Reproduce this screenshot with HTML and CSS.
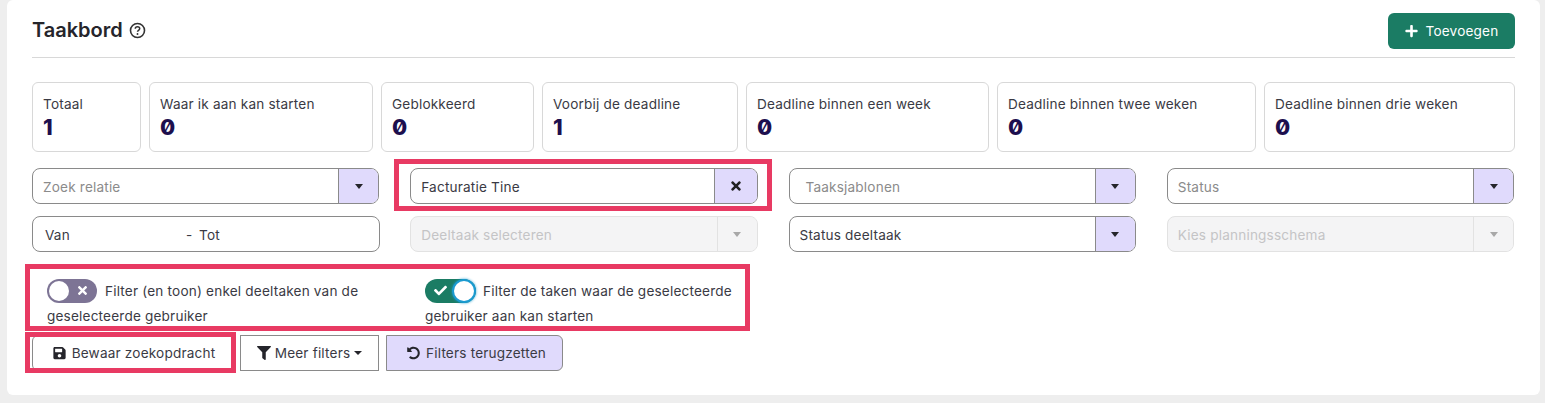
FILE: index.html
```html
<!DOCTYPE html>
<html lang="nl">
<head>
<meta charset="utf-8">
<title>Taakbord</title>
<link rel="stylesheet" href="styles.css">
</head>
<body>
<main class="card">
  <header class="head">
    <h1 class="title">Taakbord
      <svg class="help" viewBox="0 0 16 16"><circle cx="8" cy="8" r="6.6" fill="none" stroke="currentColor" stroke-width="1.5"/><path d="M5.9 6.3c0-1.2 1-1.9 2.1-1.9 1.2 0 2.1.7 2.1 1.8 0 1.6-2.1 1.6-2.1 3" fill="none" stroke="currentColor" stroke-width="1.4"/><circle cx="8" cy="11.3" r=".9" fill="currentColor"/></svg>
    </h1>
    <button class="add"><svg class="ico" viewBox="0 0 448 512"><path fill="currentColor" d="M416 208H272V64c0-17.67-14.33-32-32-32h-32c-17.67 0-32 14.33-32 32v144H32c-17.67 0-32 14.33-32 32v32c0 17.67 14.33 32 32 32h144v144c0 17.67 14.33 32 32 32h32c17.67 0 32-14.33 32-32V304h144c17.67 0 32-14.33 32-32v-32c0-17.67-14.33-32-32-32z"/></svg>Toevoegen</button>
  </header>

  <section class="stats">
    <div class="stat s1"><span class="label">Totaal</span><b class="value">1</b></div>
    <div class="stat s2"><span class="label">Waar ik aan kan starten</span><b class="value">0</b></div>
    <div class="stat s3"><span class="label">Geblokkeerd</span><b class="value">0</b></div>
    <div class="stat s4"><span class="label">Voorbij de deadline</span><b class="value">1</b></div>
    <div class="stat s5"><span class="label">Deadline binnen een week</span><b class="value">0</b></div>
    <div class="stat s6"><span class="label">Deadline binnen twee weken</span><b class="value">0</b></div>
    <div class="stat s7"><span class="label">Deadline binnen drie weken</span><b class="value">0</b></div>
  </section>

  <section class="filters">
    <div class="select"><span class="ph">Zoek relatie</span><span class="addon"><i class="caret"></i></span></div>
    <div class="select"><span class="val">Facturatie Tine</span><span class="addon wide"><svg class="x" viewBox="0 0 352 512"><path fill="currentColor" d="M242.72 256l100.07-100.07c12.28-12.28 12.28-32.19 0-44.48l-22.24-22.24c-12.28-12.28-32.19-12.28-44.48 0L176 189.28 75.93 89.21c-12.28-12.28-32.19-12.28-44.48 0L9.21 111.45c-12.28 12.28-12.28 32.19 0 44.48L109.28 256 9.21 356.07c-12.28 12.28-12.28 32.19 0 44.48l22.24 22.24c12.28 12.28 32.2 12.28 44.48 0L176 322.72l100.07 100.07c12.28 12.28 32.2 12.28 44.48 0l22.24-22.24c12.28-12.28 12.28-32.19 0-44.48L242.72 256z"/></svg></span></div>
    <div class="select"><span class="ph indent">Taaksjablonen</span><span class="addon"><i class="caret"></i></span></div>
    <div class="select"><span class="ph">Status</span><span class="addon"><i class="caret"></i></span></div>

    <div class="select date"><span class="van">Van</span><span class="dash">-</span><span class="tot">Tot</span></div>
    <div class="select off"><span class="ph">Deeltaak selecteren</span><span class="addon"><i class="caret"></i></span></div>
    <div class="select"><span class="val">Status deeltaak</span><span class="addon"><i class="caret"></i></span></div>
    <div class="select off"><span class="ph">Kies planningsschema</span><span class="addon"><i class="caret"></i></span></div>
  </section>

  <section class="toggles">
    <p class="tog-text t1"><span class="toggle no"><i class="knob"></i><svg class="tx" viewBox="0 0 352 512"><path fill="currentColor" d="M242.72 256l100.07-100.07c12.28-12.28 12.28-32.19 0-44.48l-22.24-22.24c-12.28-12.28-32.19-12.28-44.48 0L176 189.28 75.93 89.21c-12.28-12.28-32.19-12.28-44.48 0L9.21 111.45c-12.28 12.28-12.28 32.19 0 44.48L109.28 256 9.21 356.07c-12.28 12.28-12.28 32.19 0 44.48l22.24 22.24c12.28 12.28 32.2 12.28 44.48 0L176 322.72l100.07 100.07c12.28 12.28 32.2 12.28 44.48 0l22.24-22.24c12.28-12.28 12.28-32.19 0-44.48L242.72 256z"/></svg></span>Filter (en toon) enkel deeltaken van de geselecteerde gebruiker</p>
    <p class="tog-text t2"><span class="toggle yes"><svg class="tc" viewBox="0 0 512 512"><path fill="currentColor" d="M173.898 439.404l-166.4-166.4c-9.997-9.997-9.997-26.206 0-36.204l36.203-36.204c9.997-9.998 26.207-9.998 36.204 0L192 312.69 432.095 72.596c9.997-9.997 26.207-9.997 36.204 0l36.203 36.204c9.997 9.997 9.997 26.206 0 36.204l-294.4 294.401c-9.998 9.997-26.207 9.997-36.204-.001z"/></svg><i class="knob"></i></span>Filter de taken waar de geselecteerde gebruiker aan kan starten</p>
  </section>

  <section class="actions">
    <button class="btn save"><svg class="ico" viewBox="0 0 448 512"><path fill="currentColor" d="M433.941 129.941l-83.882-83.882A48 48 0 0 0 316.118 32H48C21.49 32 0 53.49 0 80v352c0 26.51 21.49 48 48 48h352c26.51 0 48-21.49 48-48V163.882a48 48 0 0 0-14.059-33.941zM224 416c-35.346 0-64-28.654-64-64 0-35.346 28.654-64 64-64s64 28.654 64 64c0 35.346-28.654 64-64 64zm96-304.52V212c0 6.627-5.373 12-12 12H76c-6.627 0-12-5.373-12-12V108c0-6.627 5.373-12 12-12h228.52c3.183 0 6.235 1.264 8.485 3.515l3.48 3.48A11.996 11.996 0 0 1 320 111.48z"/></svg>Bewaar zoekopdracht</button>
    <button class="btn more"><svg class="ico funnel" viewBox="0 0 512 512"><path fill="currentColor" d="M487.976 0H24.028C2.71 0-8.047 25.866 7.058 40.971L192 225.941V432c0 7.831 3.821 15.17 10.237 19.662l80 55.98C298.02 518.69 320 507.493 320 487.98V225.941l184.947-184.97C520.021 25.896 509.338 0 487.976 0z"/></svg>Meer filters<i class="caret small"></i></button>
    <button class="btn reset"><svg class="ico" viewBox="0 0 512 512"><path fill="currentColor" d="M255.545 8c-66.269.119-126.438 26.233-170.86 68.685L48.971 40.971C33.851 25.851 8 36.559 8 57.941V192c0 13.255 10.745 24 24 24h134.059c21.382 0 32.09-25.851 16.971-40.971l-41.75-41.75c30.864-28.899 70.801-44.907 113.23-45.273 92.398-.798 170.283 73.977 169.484 169.442C423.236 348.009 349.816 424 256 424c-41.127 0-79.997-14.678-110.63-41.556-4.743-4.161-11.906-3.908-16.368.553L89.34 422.659c-4.872 4.872-4.631 12.815.482 17.433C133.798 479.813 192.074 504 256 504c136.966 0 247.999-111.033 248-247.998C504.001 119.193 392.354 7.755 255.545 8z"/></svg>Filters terugzetten</button>
  </section>

  <div class="mark m1"></div>
  <div class="mark m2"></div>
  <div class="mark m3"></div>
</main>
</body>
</html>
```

FILE: styles.css
```css
* { box-sizing: border-box; }
html, body { margin: 0; height: 403px; overflow: hidden; }
body {
  background: #eeeeee;
  font-family: Inter, "Liberation Sans", sans-serif;
  font-size: 13.6px;
  letter-spacing: .18px;
  color: #3a3a44;
  padding: 0 5px 8px 7px;
}
.card {
  position: relative;
  height: 395px;
  background: #fff;
  border-radius: 6px;
  padding: 13px 25px 0;
}

.head {
  display: flex;
  justify-content: space-between;
  align-items: flex-start;
  height: 45px;
  border-bottom: 1px solid #d8d8d8;
}
.title {
  margin: 3px 0 0;
  font-size: 20px;
  font-weight: 600;
  letter-spacing: 0;
  line-height: 28px;
  color: #25252b;
  display: flex;
  align-items: center;
  gap: 6px;
}
.help { width: 17px; height: 17px; color: #333; }
.add {
  width: 127px;
  height: 36px;
  border: 0;
  border-radius: 6px;
  background: #1b7c64;
  color: #fff;
  font: inherit;
  letter-spacing: .18px;
  display: flex;
  align-items: center;
  justify-content: center;
  gap: 8px;
}
.ico { width: 13px; height: 14px; flex: none; }

.stats { display: flex; gap: 8px; margin-top: 24px; }
.stat {
  height: 70px;
  border: 1px solid #d8d8d8;
  border-radius: 6px;
  padding: 12px 10px 0;
  display: flex;
  flex-direction: column;
}
.s1 { width: 109px; }
.s2 { width: 224px; }
.s3 { width: 153px; }
.s4 { width: 196px; }
.s5 { width: 243px; }
.s6 { width: 259px; }
.s7 { width: 251px; }
.label { line-height: 18px; }
.value {
  font-size: 22px;
  line-height: 28px;
  font-weight: 800;
  letter-spacing: 0;
  color: #1d0f4e;
  font-feature-settings: "zero";
}

.filters {
  display: grid;
  grid-template-columns: repeat(4, 1fr);
  gap: 12px 30px;
  margin-top: 16px;
}
.select {
  display: flex;
  height: 36px;
  margin-right: 1px;
  border: 1px solid #8a8a8a;
  border-radius: 8px;
  overflow: hidden;
  align-items: center;
  background: #fff;
}
.select > span:first-child { flex: 1; padding: 2px 0 0 10px; white-space: nowrap; }
.ph { color: #8b8b8b; }
.indent { padding-left: 16px !important; }
.val { color: #3a3a44; }
.addon {
  flex: none;
  width: 40px;
  height: 100%;
  background: #e0dafc;
  border-left: 1px solid #8a8a8a;
  display: flex;
  align-items: center;
  justify-content: center;
}
.addon.wide { width: 43px; }
.x { width: 10px; height: 14px; color: #222; }
.caret {
  display: inline-block;
  width: 0;
  height: 0;
  border-left: 4.5px solid transparent;
  border-right: 4.5px solid transparent;
  border-top: 5px solid #25252b;
}
.caret.small {
  border-left-width: 4px;
  border-right-width: 4px;
  border-top-width: 4px;
  margin-left: 0;
}
.select.off { background: #f4f4f5; border-color: #e2e2e2; }
.off .ph { color: #c4c4c6; }
.off .addon { background: #f4f4f5; border-left-color: #e2e2e2; }
.off .caret { border-top-color: #a8a8a8; }
.date { margin-right: 0; color: #3a3a44; }
.date .van { flex: none !important; width: 153px; padding-left: 12px !important; }
.date .dash { width: 13px; padding-top: 2px; }
.date .tot { flex: 1; padding-top: 2px; }

.toggles {
  display: grid;
  grid-template-columns: 378px 330px;
  margin-top: 27px;
  padding-left: 15px;
}
.tog-text {
  margin: 0;
  line-height: 25px;
  color: #3a3a44;
}
.toggle {
  display: inline-flex;
  vertical-align: middle;
  align-items: center;
  width: 50px;
  height: 24px;
  border-radius: 12px;
  margin: -3px 8px 0 0;
  padding: 0 2px;
  justify-content: space-between;
}
.toggle.no { background: #7d7495; }
.toggle.yes { background: #1b7c64; width: 51px; padding-right: 2px; margin-right: 7px; }
.knob {
  display: block;
  width: 20px;
  height: 20px;
  border-radius: 50%;
  background: #fff;
}
.yes .knob { box-shadow: 0 0 0 2px #1a9ad0, 0 0 2px 3px rgba(26,154,208,.4); }
.tx { width: 9px; height: 13px; color: #fff; margin-right: 8px; }
.tc { width: 13px; height: 13px; color: #fff; margin-left: 7px; }

.actions { display: flex; gap: 8px; margin-top: 6px; }
.btn {
  height: 36px;
  border: 1px solid #8a8a8a;
  background: #fff;
  font: inherit;
  letter-spacing: .18px;
  color: #3a3a44;
  display: flex;
  align-items: center;
  justify-content: center;
  gap: 6px;
  padding: 0;
}
.btn .ico { color: #25252b; }
.save { width: 200px; padding-left: 4px; border-radius: 6px 0 0 6px; }
.more { width: 139px; gap: 4px; }
.reset { width: 177px; padding-left: 4px; margin-left: -1px; background: #e0dafc; border-radius: 0 6px 6px 0; }
.funnel { width: 14px; height: 14px; }

.mark { position: absolute; border: 5px solid #e83a63; pointer-events: none; }
.m1 { left: 387px; top: 159px; width: 378px; height: 52px; }
.m2 { left: 18px; top: 264px; width: 725px; height: 67px; }
.m3 { left: 18px; top: 332px; width: 211px; height: 41px; }
```
